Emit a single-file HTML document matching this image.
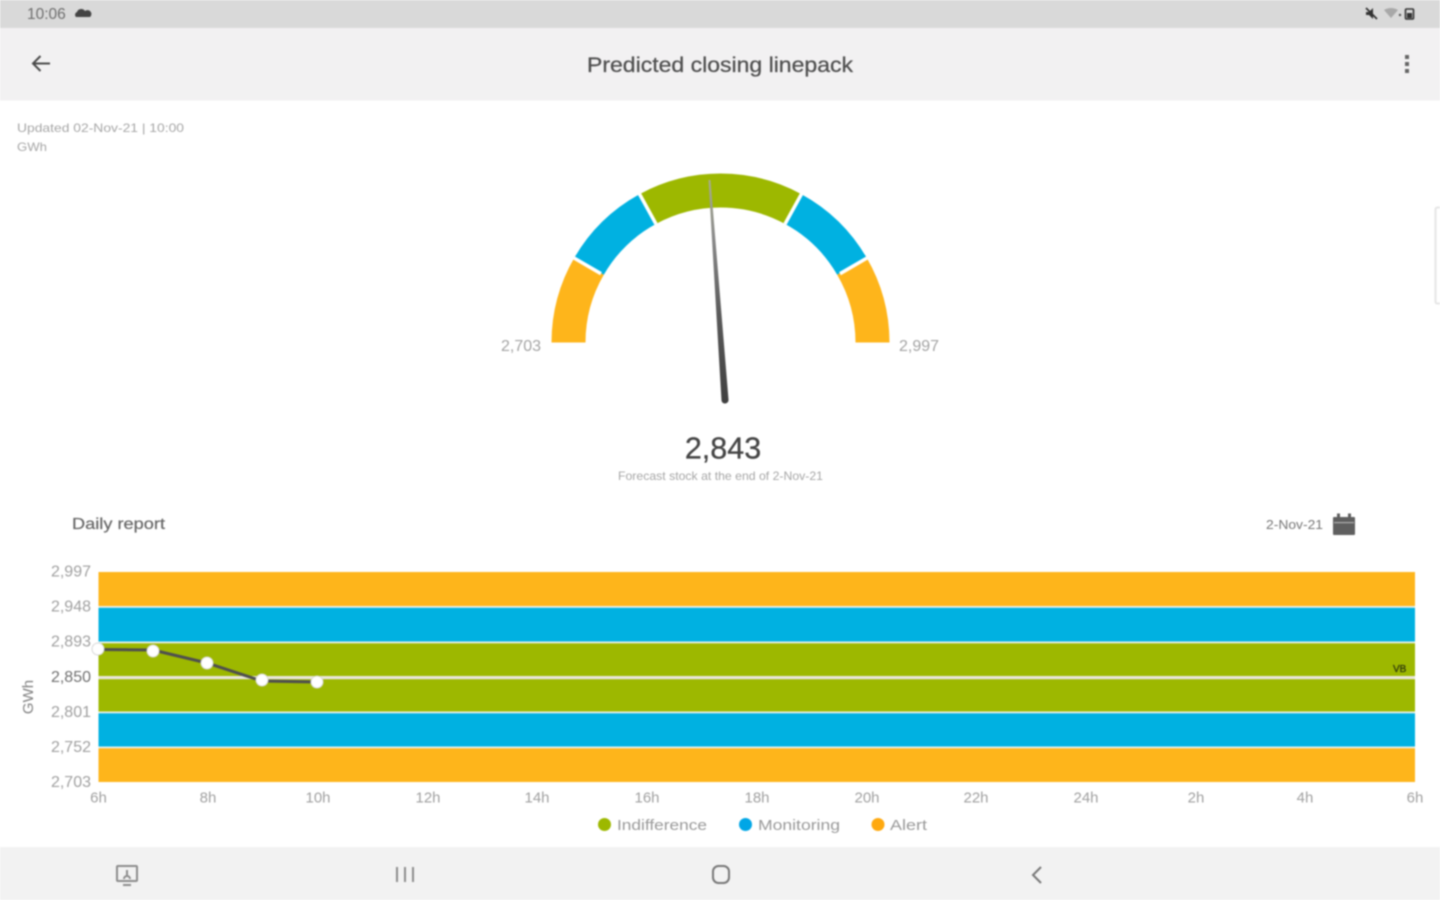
<!DOCTYPE html>
<html><head><meta charset="utf-8"><style>
html,body{margin:0;padding:0;background:#fff;}
body{width:1440px;height:900px;overflow:hidden;position:relative;font-family:"Liberation Sans",sans-serif;}
#s{position:absolute;left:0;top:0;filter:blur(0.75px);}
text{font-family:"Liberation Sans",sans-serif;}
</style></head><body>
<svg id="s" width="1440" height="900" viewBox="0 0 1440 900" xmlns="http://www.w3.org/2000/svg">
<defs><linearGradient id="n" x1="0" y1="0" x2="0" y2="1"><stop offset="0" stop-color="#a8ad90"/><stop offset="0.25" stop-color="#8a8a8a"/><stop offset="0.6" stop-color="#5a5a5a"/><stop offset="1" stop-color="#3f3f3f"/></linearGradient></defs>
<rect width="1440" height="900" fill="#fff"/>
<rect width="1440" height="28" fill="#d9d9d9"/>
<rect y="28" width="1440" height="72.500" fill="#f2f1f2"/>
<rect y="847" width="1440" height="53" fill="#f2f2f2"/>

<text x="27" y="19" font-size="15.500" fill="#6e6e6e">10:06</text>
<path d="M76 17 a3 3 0 0 1 1-5 a4.500 4.500 0 0 1 8-1 a3 3 0 0 1 5 6z" fill="#444"/>
<path d="M1366 12h3l4-4v11l-4-4h-3z" fill="#333"/><path d="M1366 8l11 11" stroke="#333" stroke-width="1.800"/>
<path d="M1384 10q7-4 14 0l-7 8z" fill="#a8a8a8"/><circle cx="1400" cy="15" r="1.200" fill="#555"/>
<rect x="1405.500" y="9" width="8" height="10" rx="1" fill="none" stroke="#333" stroke-width="1.600"/><rect x="1407" y="13" width="5" height="5" fill="#333"/>

<path d="M50 63.500H33M40.500 56l-7.500 7.500 7.500 7.500" fill="none" stroke="#4a4a4a" stroke-width="2"/>
<text x="720" y="72" font-size="21.500" text-anchor="middle" fill="#4f4f4f" stroke="#4f4f4f" stroke-width="0.250" textLength="266" lengthAdjust="spacingAndGlyphs">Predicted closing linepack</text>
<g fill="#666"><rect x="1405" y="55" width="4" height="4"/><rect x="1405" y="62" width="4" height="4"/><rect x="1405" y="69" width="4" height="4"/></g>

<text x="17" y="132" font-size="12" fill="#a6a6a6" textLength="167" lengthAdjust="spacingAndGlyphs">Updated 02-Nov-21 | 10:00</text>
<text x="17" y="151" font-size="12" fill="#a6a6a6" textLength="30" lengthAdjust="spacingAndGlyphs">GWh</text>

<path d="M1440 207.500h-2.500q-2 0-2 2v92q0 2 2 2h2.500" fill="none" stroke="#e6e6e6" stroke-width="2"/>

<!-- gauge -->
<g fill="none" stroke-width="34">
<path d="M568.500 342.500A152 152 0 0 1 589.100 266.200" stroke="#feb51b"/>
<path d="M589.100 266.200A152 152 0 0 1 647.900 209" stroke="#00b1e1"/>
<path d="M647.900 209A152 152 0 0 1 793.100 209" stroke="#9db800"/>
<path d="M793.100 209A152 152 0 0 1 851.900 266.200" stroke="#00b1e1"/>
<path d="M851.900 266.200A152 152 0 0 1 872.500 342.500" stroke="#feb51b"/>
</g>
<g stroke="#fff" stroke-width="3.500">
<path d="M601 273.700L574 258"/><path d="M656 224L639.500 194"/>
<path d="M785 224L801.500 194"/><path d="M840 273.700L867 258"/>
</g>
<path d="M708.500 180L710.500 180L728.500 399.500A3.500 3.500 0 0 1 721.500 400.500Z" fill="url(#n)"/>

<text x="521" y="351" font-size="16" text-anchor="middle" fill="#a3a3a3">2,703</text>
<text x="919" y="351" font-size="16" text-anchor="middle" fill="#a3a3a3">2,997</text>
<text x="723" y="458.500" font-size="30.500" text-anchor="middle" fill="#444" stroke="#444" stroke-width="0.300">2,843</text>
<text x="720.500" y="480" font-size="12" text-anchor="middle" fill="#a6a6a6" textLength="205" lengthAdjust="spacingAndGlyphs">Forecast stock at the end of 2-Nov-21</text>

<text x="72" y="529" font-size="16" fill="#666" stroke="#666" stroke-width="0.200" textLength="93" lengthAdjust="spacingAndGlyphs">Daily report</text>
<text x="1266" y="529" font-size="12.500" fill="#777" textLength="57" lengthAdjust="spacingAndGlyphs">2-Nov-21</text>
<rect x="1333" y="517" width="22" height="18" rx="1" fill="#5f5f5f"/>
<rect x="1337" y="513.500" width="3" height="5" fill="#5f5f5f"/><rect x="1348" y="513.500" width="3" height="5" fill="#5f5f5f"/>
<rect x="1334" y="522" width="20" height="1.200" fill="#b0b0b0"/>

<!-- chart -->
<rect x="98.500" y="572" width="1316.500" height="35" fill="#feb51b"/>
<rect x="98.500" y="607" width="1316.500" height="35" fill="#00b1e1"/>
<rect x="98.500" y="642" width="1316.500" height="70" fill="#9db800"/>
<rect x="98.500" y="712" width="1316.500" height="35" fill="#00b1e1"/>
<rect x="98.500" y="747" width="1316.500" height="35" fill="#feb51b"/>
<g fill="#e8f0ea">
<rect x="98.500" y="606" width="1316.500" height="1.800"/>
<rect x="98.500" y="641.500" width="1316.500" height="1.800"/>
<rect x="98.500" y="711.500" width="1316.500" height="1.800"/>
<rect x="98.500" y="746.500" width="1316.500" height="1.800"/>
</g>
<rect x="98.500" y="676" width="1316.500" height="3.200" fill="#e9e6dc"/>
<text x="1393" y="672" font-size="10" fill="#2f3a0c" stroke="#2f3a0c" stroke-width="0.300">VB</text>

<polyline points="98,649.500 153,650 207,663 262,681 317,682" fill="none" stroke="#4f4f4f" stroke-width="3"/>
<g fill="#fff" stroke="#d8d8d8" stroke-width="1">
<circle cx="98" cy="649" r="6"/><circle cx="153" cy="651" r="6"/><circle cx="207" cy="663" r="6"/><circle cx="262" cy="680" r="6"/><circle cx="317" cy="682" r="6"/>
</g>

<g font-size="16" fill="#a0a0a0" text-anchor="end">
<text x="91" y="576.500">2,997</text><text x="91" y="611.500">2,948</text><text x="91" y="646.500">2,893</text>
<text x="91" y="682" fill="#707070">2,850</text><text x="91" y="717">2,801</text><text x="91" y="752">2,752</text><text x="91" y="787">2,703</text>
</g>
<text transform="translate(33 697) rotate(-90)" font-size="15" text-anchor="middle" fill="#808080">GWh</text>

<g font-size="15" fill="#a0a0a0" text-anchor="middle">
<text x="98.500" y="802.500">6h</text><text x="208" y="802.500">8h</text><text x="318" y="802.500">10h</text><text x="428" y="802.500">12h</text>
<text x="537" y="802.500">14h</text><text x="647" y="802.500">16h</text><text x="757" y="802.500">18h</text><text x="867" y="802.500">20h</text>
<text x="976" y="802.500">22h</text><text x="1086" y="802.500">24h</text><text x="1196" y="802.500">2h</text><text x="1305" y="802.500">4h</text><text x="1415" y="802.500">6h</text>
</g>
<circle cx="604.500" cy="824.500" r="6.500" fill="#9db800"/>
<text x="617" y="830" font-size="15" fill="#999" textLength="90" lengthAdjust="spacingAndGlyphs">Indifference</text>
<circle cx="745.500" cy="824.500" r="6.500" fill="#00a6e6"/>
<text x="758" y="830" font-size="15" fill="#999" textLength="82" lengthAdjust="spacingAndGlyphs">Monitoring</text>
<circle cx="878" cy="824.500" r="6.500" fill="#ffa90f"/>
<text x="890" y="830" font-size="15" fill="#999" textLength="37" lengthAdjust="spacingAndGlyphs">Alert</text>

<!-- nav -->
<g fill="none" stroke="#8c8c8c" stroke-width="2">
<rect x="117" y="866" width="20" height="15" rx="1"/>
<path d="M123 885h8M127 870v5M124 879a3 3 0 0 1 6 0"/>
<path d="M397 867v15M405 867v15M413 867v15"/>
<rect x="713" y="866" width="16" height="17" rx="5.500" stroke="#777"/>
<path d="M1041 867l-8 8 8 8" stroke="#777"/>
</g>
</svg>
</body></html>
